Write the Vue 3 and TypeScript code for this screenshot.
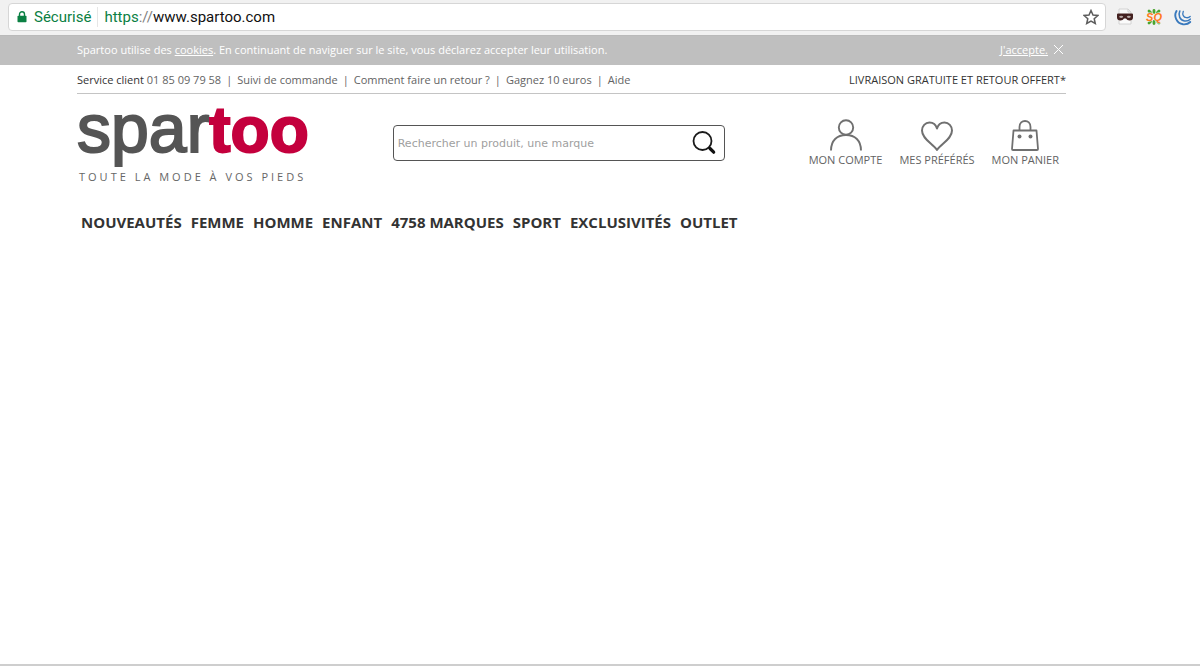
<script setup lang="ts">
import { ref } from 'vue'

const query = ref('')
const noticeOpen = ref(true)

const serviceLinks: string[] = ['Suivi de commande', 'Comment faire un retour ?', 'Gagnez 10 euros', 'Aide']
const categories: string[] = ['NOUVEAUTÉS', 'FEMME', 'HOMME', 'ENFANT', '4758 MARQUES', 'SPORT', 'EXCLUSIVITÉS', 'OUTLET']
</script>

<template>
  <div class="page">
    <header class="browser">
      <div class="address">
        <svg class="lock" viewBox="0 0 10 12" aria-hidden="true">
          <path d="M2.5 5V3.2a2.5 2.5 0 0 1 5 0V5" fill="none" stroke="#0b8043" stroke-width="1.4" />
          <rect x="0.5" y="4.8" width="9" height="6.4" rx="0.8" fill="#0b8043" />
        </svg>
        <span class="secure">Sécurisé</span>
        <span class="url"><span class="scheme">https</span><span class="slashes">://</span>www.spartoo.com</span>
        <button class="icon-button star" type="button" aria-label="Ajouter aux favoris">
          <svg viewBox="0 0 16 16" width="16" height="16">
            <path d="M8 1.500l2 4.500 4.900.5-3.700 3.200 1.100 4.800L8 12l-4.300 2.500 1.100-4.800L1.100 6.500 6 6z" fill="none" stroke="#5c5c5c" stroke-width="1.500" />
          </svg>
        </button>
      </div>
      <div class="extensions">
        <svg viewBox="0 0 18 18" width="18" height="18" aria-hidden="true">
          <path d="M3 1h9l3 3v12H3z" fill="#fafafa" stroke="#cfcfcf" stroke-width="0.9" />
          <path d="M12 1v3h3" fill="none" stroke="#cfcfcf" />
          <path d="M1 6.500q0-1 1-1h14q1 0 1 1v3q0 3-3.500 3-2.500 0-3.500-2H8q-1 2-3.500 2Q1 12.500 1 9.500z" fill="#43201f" />
          <ellipse cx="5.200" cy="8.800" rx="2" ry="1.100" fill="#b9aaa7" />
          <ellipse cx="12.800" cy="8.800" rx="2" ry="1.100" fill="#b9aaa7" />
        </svg>
        <svg viewBox="0 0 18 18" width="18" height="18" aria-hidden="true">
          <path d="M9 4.500V2.500M5.500 4.500L4 3M12.500 4.500L14 3M9 13.500V15.500M5.500 13.500L4 15M12.500 13.500L14 15" stroke="#4aa52e" stroke-width="2.800" stroke-linecap="round" />
          <text x="9" y="13" text-anchor="middle" class="sq">SQ</text>
        </svg>
        <svg viewBox="0 0 18 18" width="18" height="18" aria-hidden="true">
          <g fill="none" stroke="#3979bd" stroke-linecap="round">
            <path d="M2.500 3C-.5 8 2.500 15.500 9 16.300c3 .3 5.500-.5 7.200-2.300" stroke-width="1.900" />
            <path d="M5.800 3C3.800 7.500 6 12.300 10.500 13c2.500.3 4.500-.5 5.700-1.800" stroke-width="1.600" />
            <path d="M9.300 3.300C8 6.700 9.500 9.300 12.400 9.700c1.700.2 2.900-.3 3.800-1.200" stroke-width="1.300" />
          </g>
        </svg>
      </div>
    </header>

    <div v-if="noticeOpen" class="notice">
      <p>Spartoo utilise des <a href="#cookies">cookies</a>. En continuant de naviguer sur le site, vous déclarez accepter leur utilisation.</p>
      <button class="accept" type="button" @click="noticeOpen = false">J'accepte.</button>
      <button class="icon-button close" type="button" aria-label="Fermer" @click="noticeOpen = false">
        <svg viewBox="0 0 11 11" width="11" height="11"><path d="M1 1l9 9M10 1l-9 9" stroke="#fff" stroke-width="1" /></svg>
      </button>
    </div>

    <div class="content">
      <div class="service">
        <div class="service-links">
          <span><span class="dark">Service client</span> 01 85 09 79 58</span>
          <template v-for="link in serviceLinks" :key="link">
            <span>|</span>
            <a href="#">{{ link }}</a>
          </template>
        </div>
        <p class="dark">LIVRAISON GRATUITE ET RETOUR OFFERT*</p>
      </div>

      <div class="masthead">
        <a class="logo" href="#" aria-label="Spartoo">
          <span class="wordmark"><span class="spar">spar</span><span class="too">too</span></span>
          <span class="tagline">TOUTE LA MODE À VOS PIEDS</span>
        </a>

        <form class="search" role="search" @submit.prevent>
          <input v-model="query" type="text" aria-label="Rechercher" placeholder="Rechercher un produit, une marque" />
          <button class="icon-button" type="submit" aria-label="Lancer la recherche">
            <svg viewBox="0 0 24 24" width="24" height="24">
              <circle cx="10.500" cy="10" r="9" fill="none" stroke="#1a1a1a" stroke-width="1.800" />
              <path d="M16.500 16l1.500 1.500" stroke="#111" stroke-width="2" />
              <path d="M18 17.500l3.700 3.700" stroke="#111" stroke-width="3.200" stroke-linecap="round" />
            </svg>
          </button>
        </form>

        <nav class="account" aria-label="Compte">
          <a href="#">
            <svg viewBox="0 0 34 34" width="34" height="34">
              <g fill="none" stroke="#707070" stroke-width="1.900">
                <circle cx="17" cy="9.500" r="7.200" />
                <path d="M2 32.500c0-10 6-15.500 15-15.500s15 5.500 15 15.500" />
              </g>
            </svg>
            MON COMPTE
          </a>
          <a href="#">
            <svg viewBox="0 0 34 34" width="34" height="34">
              <path d="M17 32C12.500 25.500 2 21 2 12.500 2 8 5.300 4.500 9.500 4.500c4 0 6.500 2.500 7.500 6 1-3.500 3.500-6 7.500-6 4.200 0 7.500 3.500 7.500 8 0 8.500-10.500 13-15 19.500z" fill="none" stroke="#707070" stroke-width="2" stroke-linejoin="round" />
            </svg>
            MES PRÉFÉRÉS
          </a>
          <a href="#">
            <svg viewBox="0 0 34 34" width="34" height="34">
              <path d="M5.500 12.500h23L30 31q0 1-1 1H5q-1 0-1-1z" fill="none" stroke="#707070" stroke-width="1.800" stroke-linejoin="round" />
              <path d="M11.500 12.500V9c0-8 11-8 11 0v3.500" fill="none" stroke="#707070" stroke-width="1.800" />
              <circle cx="11.500" cy="18.500" r="2" fill="#707070" />
              <circle cx="22.500" cy="18.500" r="2" fill="#707070" />
            </svg>
            MON PANIER
          </a>
        </nav>
      </div>

      <nav class="categories" aria-label="Rayons">
        <a v-for="category in categories" :key="category" href="#">{{ category }}</a>
      </nav>
    </div>
  </div>
</template>

<style>
body {
  margin: 0;
  background: #fff;
}
</style>

<style scoped>
.page {
  display: flex;
  flex-direction: column;
  box-sizing: border-box;
  min-height: 100vh;
  border-bottom: 2px solid #cecece;
  font-family: "Open Sans", "Noto Sans", sans-serif;
  font-size: 11px;
  line-height: 16px;
  color: #636363;
}
p {
  margin: 0;
}
a {
  color: inherit;
  text-decoration: none;
}
svg {
  display: block;
}
button {
  padding: 0;
  border: 0;
  background: none;
  color: inherit;
  font: inherit;
  cursor: pointer;
}
.browser {
  display: flex;
  align-items: center;
  gap: 10px;
  padding: 3px 8px 4px;
  background: #f1f1f1;
  border-bottom: 1px solid #bababa;
}
.address {
  display: flex;
  flex: 1;
  align-items: center;
  box-sizing: border-box;
  height: 28px;
  padding: 0 6px 0 8px;
  background: #fff;
  border: 1px solid #d6d6d6;
  border-radius: 4px;
  font-family: Roboto, "Liberation Sans", sans-serif;
  font-size: 15px;
  line-height: 20px;
  color: #111;
}
.lock {
  width: 10px;
  height: 12px;
  margin-right: 7px;
}
.secure {
  padding-right: 6px;
  margin-right: 6px;
  border-right: 1px solid #e6e6e6;
}
.secure,
.scheme {
  color: #0b8043;
}
.slashes {
  color: #808080;
}
.star {
  margin-left: auto;
}
.extensions {
  display: flex;
  gap: 11px;
}
.sq {
  font: italic bold 11px "Liberation Sans", sans-serif;
  fill: #ff7a1a;
  stroke: #f1f1f1;
  stroke-width: 1px;
  paint-order: stroke;
}
.notice {
  display: flex;
  align-items: center;
  box-sizing: border-box;
  min-height: 29px;
  padding: 0 136px 2px 77px;
  background: #bfbfbf;
  color: #fff;
}
.notice a {
  text-decoration: underline;
}
.accept {
  margin-left: auto;
  text-decoration: underline;
}
.close {
  margin-left: 5px;
}
.content {
  padding: 0 134px 0 77px;
}
.service {
  display: flex;
  justify-content: space-between;
  padding: 7px 0 5px;
  border-bottom: 1px solid #c4c4c4;
}
.service-links {
  display: flex;
  flex-wrap: wrap;
  gap: 5px;
}
.dark {
  color: #333;
}
.masthead {
  display: flex;
  align-items: flex-start;
  justify-content: space-between;
}
.logo {
  display: flex;
  flex-direction: column;
}
.wordmark {
  font-family: "Liberation Sans", Arial, sans-serif;
  font-size: 68px;
  line-height: 68px;
  color: #555;
}
.spar {
  -webkit-text-stroke: 2px #555;
}
.too {
  font-size: 64px;
  font-weight: bold;
  color: #c4003d;
  -webkit-text-stroke: 2px #c4003d;
}
.tagline {
  padding: 5px 0 0 2px;
  letter-spacing: 3px;
  color: #666;
}
.search {
  display: flex;
  align-items: center;
  box-sizing: border-box;
  width: 332px;
  height: 36px;
  margin-top: 31px;
  padding: 0 8px 0 4px;
  border: 1px solid #555;
  border-radius: 4px;
}
.search input {
  flex: 1;
  min-width: 0;
  padding: 0;
  border: 0;
  outline: 0;
  background: none;
  font-family: "DejaVu Sans", sans-serif;
  font-size: 11px;
  color: #333;
}
.search input::placeholder {
  color: #a0a0a0;
  opacity: 1;
}
.account {
  display: flex;
  gap: 17px;
  margin-top: 24px;
  padding-right: 7px;
}
.account a {
  display: flex;
  flex-direction: column;
  align-items: center;
}
.categories {
  display: flex;
  flex-wrap: wrap;
  gap: 9px;
  padding: 27px 4px;
  font-size: 15px;
  font-weight: bold;
  line-height: 20px;
  color: #333;
}
</style>
